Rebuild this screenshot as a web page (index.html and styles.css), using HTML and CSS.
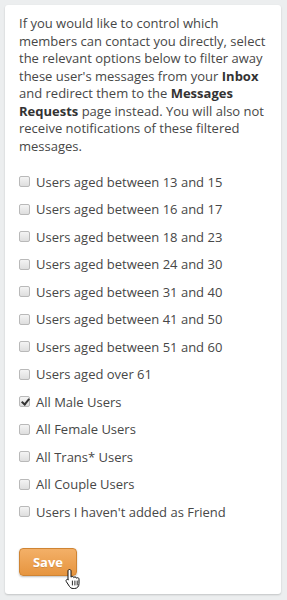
FILE: index.html
```html
<!DOCTYPE html>
<html lang="en">
<head>
    <meta charset="UTF-8">
    <meta name="viewport" content="width=device-width, initial-scale=1.0">
    <title>Message Filters</title>
    <link rel="stylesheet" href="styles.css">
</head>
<body>

<!-- Filter settings card -->
<div class="card">
    <p class="intro">
        If you would like to control which members can contact you directly, select the relevant options below to filter away these user's messages from your <b>Inbox</b> and redirect them to the <b>Messages Requests</b> page instead. You will also not receive notifications of these filtered messages.
    </p>

    <form class="filters">
        <label class="row"><input type="checkbox" class="check"> Users aged between 13 and 15</label>
        <label class="row"><input type="checkbox" class="check"> Users aged between 16 and 17</label>
        <label class="row"><input type="checkbox" class="check"> Users aged between 18 and 23</label>
        <label class="row"><input type="checkbox" class="check"> Users aged between 24 and 30</label>
        <label class="row"><input type="checkbox" class="check"> Users aged between 31 and 40</label>
        <label class="row"><input type="checkbox" class="check"> Users aged between 41 and 50</label>
        <label class="row"><input type="checkbox" class="check"> Users aged between 51 and 60</label>
        <label class="row"><input type="checkbox" class="check"> Users aged over 61</label>
        <label class="row"><input type="checkbox" class="check" checked> All Male Users</label>
        <label class="row"><input type="checkbox" class="check"> All Female Users</label>
        <label class="row"><input type="checkbox" class="check"> All Trans* Users</label>
        <label class="row"><input type="checkbox" class="check"> All Couple Users</label>
        <label class="row"><input type="checkbox" class="check"> Users I haven't added as Friend</label>

        <div class="actions">
            <button type="button" class="save">Save</button>
            <!-- mouse pointer over the button -->
            <svg class="pointer" width="16" height="22" viewBox="0 0 16 22">
                <path d="M4.5 1.5c.9 0 1.5.6 1.5 1.5v6.2c.3-.5.8-.7 1.4-.7.8 0 1.3.5 1.4 1.1.3-.4.8-.6 1.3-.6.8 0 1.3.5 1.4 1.2.3-.3.7-.5 1.1-.5.9 0 1.4.6 1.4 1.5v4.3c0 3-1.8 5-4.6 5H8.2c-1.7 0-2.8-.7-3.7-2L1.3 13.6c-.5-.8-.3-1.6.3-2 .6-.4 1.4-.3 1.9.3L3 11.3V3c0-.9.6-1.5 1.5-1.5z" fill="#fff" stroke="#111" stroke-width="1" stroke-linejoin="round"/>
                <path d="M7.4 13v4M9.9 13v4M12.2 13v4" stroke="#111" stroke-width="0.9" stroke-linecap="round"/>
            </svg>
        </div>
    </form>
</div>

</body>
</html>
```

FILE: styles.css
```css
body {
    font-family: "Open Sans", Arial, sans-serif;
    margin: 0;
    padding: 5px 6px 7px 5px;
    background-color: #eceeef;
    color: #474747;
}

/* Main card */
.card {
    background-color: #fff;
    border-radius: 3px;
    box-shadow: 0 1px 2px rgba(0, 0, 0, 0.18);
    padding: 10px 14px 18px 14px;
}

.intro {
    margin: 0 0 13px 0;
    font-size: 13px;
    line-height: 17.5px;
}

.intro b {
    color: #333;
}

.filters {
    display: flex;
    flex-direction: column;
    margin: 0;
}

.row {
    display: flex;
    align-items: center;
    height: 27.5px;
    font-size: 13px;
    cursor: pointer;
}

/* Checkbox look */
.check {
    appearance: none;
    -webkit-appearance: none;
    width: 11px;
    height: 11px;
    margin: 0 6px 0 0;
    border: 1px solid #b9b9b9;
    border-radius: 2px;
    background: linear-gradient(#f4f4f4, #dedede);
    position: relative;
    flex-shrink: 0;
}

.check:checked::after {
    content: "";
    position: absolute;
    left: 3px;
    top: 0px;
    width: 3px;
    height: 6px;
    border: solid #333;
    border-width: 0 2px 2px 0;
    transform: rotate(40deg);
}

.actions {
    position: relative;
    margin-top: 22px;
    height: 28px;
}

.save {
    font-family: "Open Sans", Arial, sans-serif;
    font-size: 13px;
    font-weight: bold;
    color: #fff;
    width: 58px;
    height: 28px;
    border: 1px solid #cf8433;
    border-radius: 4px;
    background: linear-gradient(#f3b068, #e6953f);
    box-shadow: 0 1px 2px rgba(0, 0, 0, 0.25);
    text-shadow: 0 1px 0 rgba(0, 0, 0, 0.12);
    cursor: pointer;
}

.pointer {
    position: absolute;
    left: 46px;
    top: 20px;
}
```
